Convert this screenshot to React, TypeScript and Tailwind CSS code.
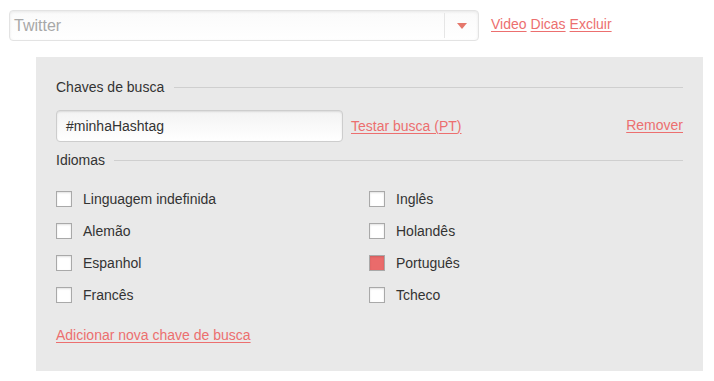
import { useState } from "react";

const LINK = "text-[#ec6f6f] underline underline-offset-2 decoration-1";

const LEFT = ["Linguagem indefinida", "Alemão", "Espanhol", "Francês"];
const RIGHT = ["Inglês", "Holandês", "Português", "Tcheco"];

function Check({ label, initial = false }: { label: string; initial?: boolean }) {
  const [on, setOn] = useState(initial);
  return (
    <label className="flex items-center h-[32px] cursor-pointer" onClick={() => setOn(!on)}>
      <span
        className={`w-[16px] h-[16px] border border-[#a9a9a9] shadow-[inset_0_1px_2px_rgba(0,0,0,0.12)] ${on ? "bg-[#ea6b6b]" : "bg-white"}`}
      />
      <span className="ml-[11px] text-[14px] text-[#333]">{label}</span>
    </label>
  );
}

function Legend({ title, lineStart }: { title: string; lineStart: string }) {
  return (
    <div className="flex items-center h-[20px]">
      <span className="text-[14px] text-[#333]">{title}</span>
      <span className={`flex-1 h-px bg-[#cfcfcf] ${lineStart}`} />
    </div>
  );
}

export default function App() {
  return (
    <div className="w-[714px] h-[381px] bg-white relative" style={{ fontFamily: '"Liberation Sans", Arial, sans-serif' }}>
      {/* top row */}
      <div className="flex items-center pt-[10px] pl-[9px]">
        <div className="w-[470px] h-[31px] flex items-center rounded-[4px] border border-[#e3e3e3] bg-gradient-to-b from-[#fafafa] to-white shadow-[inset_0_1px_3px_rgba(0,0,0,0.08)]">
          <span className="flex-1 pl-[4px] text-[16px] text-[#a8a8a8]">Twitter</span>
          <span className="w-px h-[25px] bg-[#e6e6e6]" />
          <span className="w-[33px] flex justify-center">
            <svg width="10" height="6" viewBox="0 0 10 6">
              <path d="M0 0h10L5 6z" fill="#e5776b" />
            </svg>
          </span>
        </div>
        <div className="ml-[12px] flex gap-[4px] text-[14px] -mt-[3px]">
          <a className={LINK}>Video</a>
          <a className={LINK}>Dicas</a>
          <a className={LINK}>Excluir</a>
        </div>
      </div>

      {/* panel */}
      <div className="ml-[36px] mt-[16px] w-[667px] h-[314px] bg-[#e9e9e9] pl-[20px] pr-[20px] pt-[20px]">
        <Legend title="Chaves de busca" lineStart="ml-[10px]" />
        <div className="flex items-center mt-[13px]">
          <div className="w-[287px] h-[32px] rounded-[4px] border border-[#cdcdcd] bg-gradient-to-b from-[#f3f3f3] to-white flex items-center pl-[9px] text-[14px] text-[#333] shadow-[inset_0_1px_2px_rgba(0,0,0,0.1)]">
            #minhaHashtag
          </div>
          <a className={`${LINK} ml-[8px] text-[14px]`}>Testar busca (PT)</a>
          <a className={`${LINK} ml-auto text-[14px] -mt-[2px]`}>Remover</a>
        </div>
        <div className="mt-[8px]">
          <Legend title="Idiomas" lineStart="ml-[9px]" />
        </div>
        <div className="grid grid-cols-[313px_1fr] mt-[13px]">
          <div>
            {LEFT.map((l) => (
              <Check key={l} label={l} />
            ))}
          </div>
          <div>
            {RIGHT.map((l) => (
              <Check key={l} label={l} initial={l === "Português"} />
            ))}
          </div>
        </div>
        <div className="mt-[12px]">
          <a className={`${LINK} text-[14px]`}>Adicionar nova chave de busca</a>
        </div>
      </div>
    </div>
  );
}
